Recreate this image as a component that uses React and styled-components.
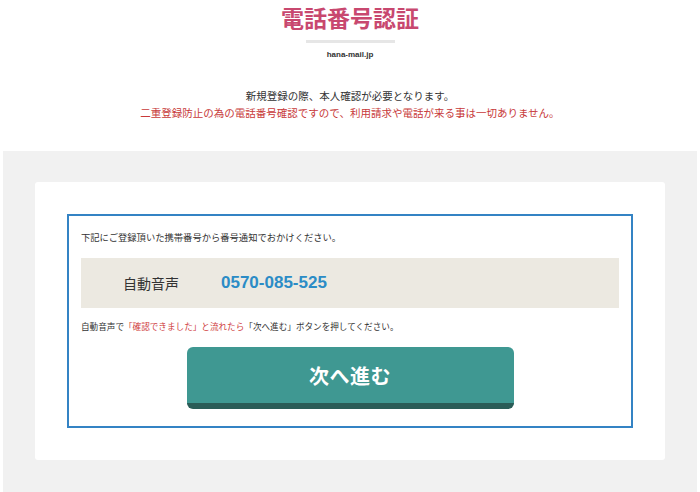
import React from 'react';
import styled, { createGlobalStyle } from 'styled-components';

const GlobalStyle = createGlobalStyle`
    body {
        margin: 0;
        background: #fff;
        font-family: "Noto Sans CJK JP", "Noto Sans", sans-serif;
        color: #333;
    }
`;

const Header = styled.header`
    display: flex;
    flex-direction: column;
    align-items: center;
    padding-top: 4px;
`;

const Title = styled.h1`
    margin: 0;
    font-size: 23px;
    line-height: 26px;
    font-weight: 700;
    color: #c8486f;
`;

const TitleBar = styled.div`
    width: 89px;
    height: 3px;
    margin-top: 10px;
    background: #e6e6e6;
`;

const Domain = styled.div`
    margin-top: 6px;
    font-family: "Liberation Sans", Arial, sans-serif;
    font-size: 8px;
    line-height: 12px;
    font-weight: 700;
    color: #333;
`;

const Notice = styled.div`
    margin-top: 26px;
    text-align: center;
    font-size: 10.5px;
    line-height: 17px;
`;

const NoticeLine = styled.p`
    margin: 0;
    color: ${props => props.warn ? '#c83a3a' : '#333'};
`;

const Section = styled.section`
    margin: 30px 3px 0;
    padding: 31px 32px 32px;
    background: #f1f1f1;
`;

const Card = styled.div`
    background: #fff;
    border-radius: 3px;
    padding: 32px;
`;

const CallBox = styled.div`
    border: 2px solid #3483c4;
    padding: 14px 12px 17px;
    display: flex;
    flex-direction: column;
`;

const Lead = styled.p`
    margin: 0;
    font-size: ${props => props.small ? 8.6 : 9.3}px;
    line-height: 14px;
    color: #333;
    margin-top: ${props => props.gap || 0}px;
`;

const Red = styled.span`
    color: #d0413f;
`;

const NumberBar = styled.div`
    margin-top: 14px;
    height: 50px;
    background: #ece9e1;
    display: flex;
    align-items: center;
    gap: 42px;
    padding-left: 42px;
`;

const Label = styled.span`
    font-size: 14px;
    color: #333;
`;

const Phone = styled.span`
    font-family: "Liberation Sans", Arial, sans-serif;
    font-size: 17px;
    font-weight: 700;
    color: #2b8cc6;
`;

const NextButton = styled.button`
    align-self: center;
    margin-top: 14px;
    width: 327px;
    height: 62px;
    border: none;
    border-bottom: 6px solid #2a5c57;
    border-radius: 6px;
    background: #3f9892;
    color: #fff;
    font-family: "Noto Sans CJK JP", sans-serif;
    font-size: 20px;
    font-weight: 700;
    letter-spacing: 0.5px;
    cursor: pointer;
    padding: 0;
`;

export default function App() {
    return (
        <>
            <GlobalStyle />
            <Header>
                <Title>電話番号認証</Title>
                <TitleBar />
                <Domain>hana-mail.jp</Domain>
            </Header>
            <Notice>
                <NoticeLine>新規登録の際、本人確認が必要となります。</NoticeLine>
                <NoticeLine warn>二重登録防止の為の電話番号確認ですので、利用請求や電話が来る事は一切ありません。</NoticeLine>
            </Notice>
            <Section>
                <Card>
                    <CallBox>
                        <Lead>下記にご登録頂いた携帯番号から番号通知でおかけください。</Lead>
                        <NumberBar>
                            <Label>自動音声</Label>
                            <Phone>0570-085-525</Phone>
                        </NumberBar>
                        <Lead small gap={11}>
                            自動音声で<Red>「確認できました」と流れたら</Red>「次へ進む」ボタンを押してください。
                        </Lead>
                        <NextButton>次へ進む</NextButton>
                    </CallBox>
                </Card>
            </Section>
        </>
    );
}
